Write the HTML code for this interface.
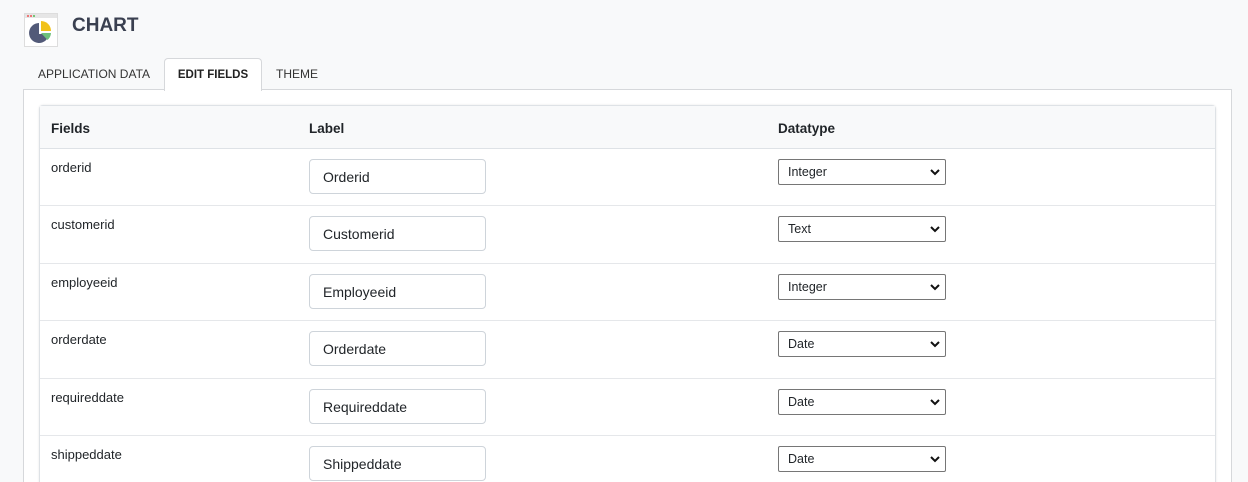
<!DOCTYPE html>
<html><head><style>
html,body{margin:0;height:482px;overflow:hidden}
body{background:#f8f9fa;font-family:"Liberation Sans",sans-serif;width:1248px;position:relative;color:#212529}
.icon{position:absolute;left:24px;top:13px;width:32px;height:32px;border:1px solid #ddd;background:#fff}
.title{position:absolute;left:72px;top:15px;font-size:19px;font-weight:bold;color:#3a4050}
.tab{position:absolute;top:58px;height:32px;line-height:32px;font-size:12px;color:#333}
.tab.active{background:#fff;border:1px solid #d6d8db;border-bottom:none;border-radius:4px 4px 0 0;font-weight:bold;color:#222;z-index:2;height:32px;font-size:11.5px}
.panel{position:absolute;left:23px;top:89px;width:1207px;height:400px;background:#fff;border:1px solid #d6d8db}
.box{position:absolute;left:15px;top:15px;width:1175px;height:400px;border:1px solid #dee2e6;border-radius:4px;box-shadow:0 0 2px rgba(0,0,0,.1)}
.hdr{height:41.5px;background:#f8f9fa;border-bottom:1px solid #dee2e6;font-weight:bold;font-size:13.5px;position:relative}
.row{height:56.5px;border-bottom:1px solid #e5e7ea;position:relative;font-size:13px}
.c1{position:absolute;left:11px}
.c2{position:absolute;left:269px}
.c3{position:absolute;left:738px}
.hdr span{top:15px}
.row .c1{top:11px}
.inp{top:10px;border:1px solid #ced4da;border-radius:4px;line-height:34px;padding-left:13px;box-sizing:border-box;width:177px;height:35px;font-size:14px}
.sel{top:10px;width:168px;height:26px;border:1px solid #767676;border-radius:2px;box-sizing:border-box;font-size:12.5px;line-height:24px;padding-left:9px;background:#fff}
.sel svg{position:absolute;right:5px;top:8px}
</style></head><body>
<div class="icon"><svg width="32" height="32" viewBox="0 0 32 32"><rect x="0" y="0" width="32" height="4" fill="#e6e6e6"/><circle cx="3" cy="2" r="1" fill="#e55"/><circle cx="6" cy="2" r="1" fill="#e55"/><circle cx="9" cy="2" r="1" fill="#5b5"/><path d="M14 9 A10 10 0 1 0 24 20 L14 20Z" fill="#525a78"/><path d="M16 7 A10 10 0 0 1 26 17 L16 17Z" fill="#f1c21b"/><path d="M16 19 L26 19 A10 10 0 0 1 22.5 26Z" fill="#6cc17a"/></svg></div>
<div class="title">CHART</div>
<div class="tab" style="left:38px">APPLICATION DATA</div>
<div class="tab active" style="left:164px;width:96px;text-align:center">EDIT FIELDS</div>
<div class="tab" style="left:276px">THEME</div>
<div class="panel"><div class="box">
<div class="hdr"><span class="c1">Fields</span><span class="c2">Label</span><span class="c3">Datatype</span></div>
<div class="row"><span class="c1">orderid</span><div class="c2 inp">Orderid</div><div class="c3 sel">Integer<svg width="10" height="8"><path d="M1 2 L5 6 L9 2" stroke="#111" stroke-width="2" fill="none"/></svg></div></div>
<div class="row"><span class="c1">customerid</span><div class="c2 inp">Customerid</div><div class="c3 sel">Text<svg width="10" height="8"><path d="M1 2 L5 6 L9 2" stroke="#111" stroke-width="2" fill="none"/></svg></div></div>
<div class="row"><span class="c1">employeeid</span><div class="c2 inp">Employeeid</div><div class="c3 sel">Integer<svg width="10" height="8"><path d="M1 2 L5 6 L9 2" stroke="#111" stroke-width="2" fill="none"/></svg></div></div>
<div class="row"><span class="c1">orderdate</span><div class="c2 inp">Orderdate</div><div class="c3 sel">Date<svg width="10" height="8"><path d="M1 2 L5 6 L9 2" stroke="#111" stroke-width="2" fill="none"/></svg></div></div>
<div class="row"><span class="c1">requireddate</span><div class="c2 inp">Requireddate</div><div class="c3 sel">Date<svg width="10" height="8"><path d="M1 2 L5 6 L9 2" stroke="#111" stroke-width="2" fill="none"/></svg></div></div>
<div class="row"><span class="c1">shippeddate</span><div class="c2 inp">Shippeddate</div><div class="c3 sel">Date<svg width="10" height="8"><path d="M1 2 L5 6 L9 2" stroke="#111" stroke-width="2" fill="none"/></svg></div></div>
</div></div>
</body></html>
